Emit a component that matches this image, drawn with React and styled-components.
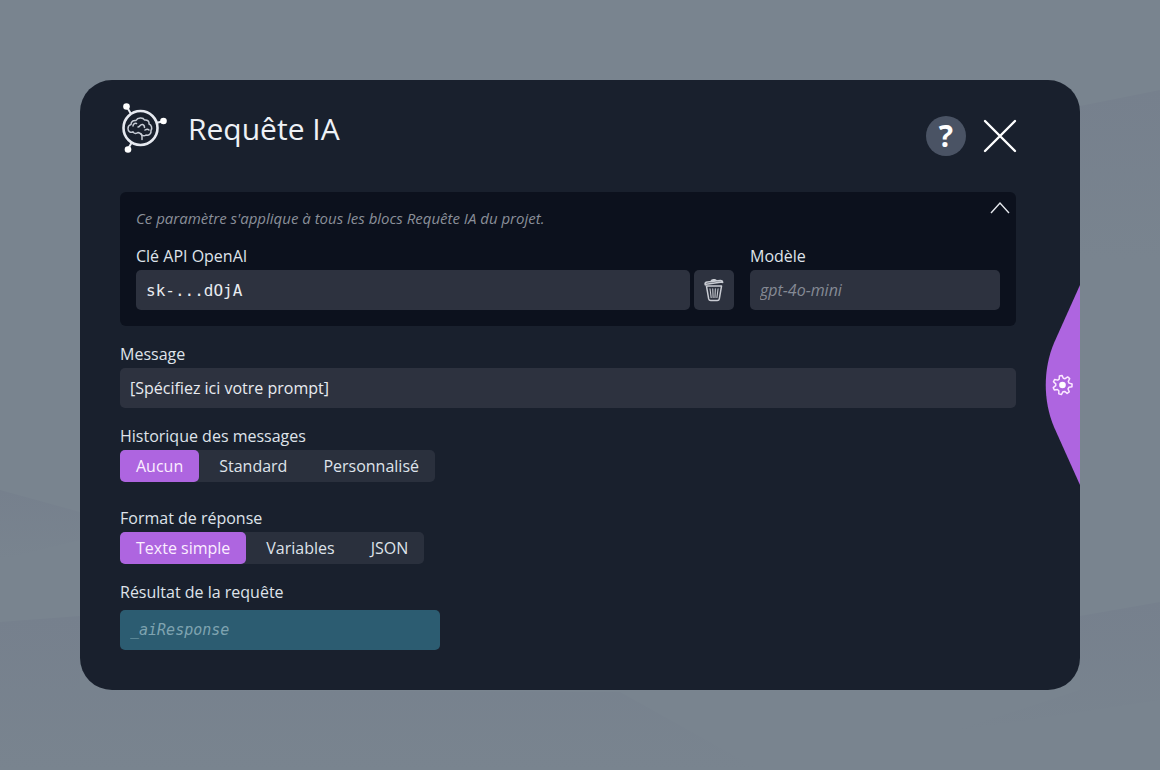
import React, { useState } from "react";
import styled, { createGlobalStyle } from "styled-components";

const GlobalStyle = createGlobalStyle`
  * {
    box-sizing: border-box;
  }
  body {
    margin: 0;
    background: #79848f;
    color: #dfe3ea;
    font-family: "Open Sans", "Noto Sans", sans-serif;
    font-size: 16px;
  }
`;

const Page = styled.div`
  position: relative;
  min-height: 100vh;
  padding: 80px;
`;

const Backdrop = styled.svg`
  position: absolute;
  inset: 0;
  width: 100%;
  height: 100%;
`;

const Modal = styled.main`
  position: relative;
  padding: 24px 64px 40px 40px;
  border-radius: 32px;
  background: #19202d;
  overflow: hidden;
`;

const Header = styled.header`
  display: flex;
  align-items: flex-start;
  margin-bottom: 36px;
`;

const Logo = styled.svg`
  width: 48px;
  height: 50px;
  overflow: visible;
`;

const Title = styled.h1`
  flex: 1;
  margin: 0 0 0 20px;
  color: #eef1f6;
  font-size: 30px;
  font-weight: 400;
  line-height: 50px;
`;

const Actions = styled.div`
  display: flex;
  gap: 18px;
  padding-top: 12px;
`;

const HelpButton = styled.button`
  width: 40px;
  height: 40px;
  padding: 0;
  border: none;
  border-radius: 50%;
  background: #4a5364;
  color: white;
  font-family: inherit;
  font-size: 30px;
  font-weight: 700;
  line-height: 40px;
  cursor: pointer;
`;

const CloseButton = styled.button`
  display: flex;
  align-items: center;
  justify-content: center;
  width: 32px;
  height: 40px;
  padding: 0;
  border: none;
  background: none;
  cursor: pointer;
  svg {
    flex: none;
    overflow: visible;
  }
`;

const Panel = styled.section`
  position: relative;
  padding: 16px;
  border-radius: 6px;
  background: #0c111d;
`;

const Hint = styled.p`
  margin: 0 0 14px;
  color: #8a8f99;
  font-size: 15px;
  font-style: italic;
  line-height: 20px;
`;

const CollapseButton = styled.button`
  position: absolute;
  top: 8px;
  right: 6px;
  display: flex;
  padding: 0;
  border: none;
  background: none;
  cursor: pointer;
`;

const PanelFields = styled.div`
  display: flex;
  align-items: flex-end;
  gap: 16px;
`;

const KeyGroup = styled.div`
  display: flex;
  flex: 1;
  align-items: flex-end;
  gap: 4px;
`;

const Field = styled.div`
  flex: ${(props) => (props.$width ? `0 0 ${props.$width}` : 1)};
  min-width: 0;
`;

const Form = styled.form`
  display: flex;
  flex-direction: column;
  gap: 14px;
`;

const Label = styled.label`
  display: block;
  line-height: 28px;
`;

const Input = styled.input`
  display: block;
  width: 100%;
  height: 40px;
  padding: 0 10px;
  border: none;
  border-radius: 5px;
  outline: none;
  background: #2d323f;
  color: #e8ebf0;
  font-family: ${(props) =>
    props.$mono ? `"DejaVu Sans Mono", monospace` : "inherit"};
  font-size: 16px;
  &::placeholder {
    color: #858a95;
    font-style: italic;
    opacity: 1;
  }
`;

const ResultInput = styled(Input)`
  width: 320px;
  max-width: 100%;
  margin-top: 4px;
  background: #2c5c71;
  font-size: 15px;
  &::placeholder {
    color: #7fa3b0;
  }
`;

const TrashButton = styled.button`
  display: flex;
  align-items: center;
  justify-content: center;
  width: 40px;
  height: 40px;
  padding: 0;
  border: none;
  border-radius: 5px;
  background: #2d323f;
  cursor: pointer;
`;

const Choice = styled.fieldset`
  min-width: 0;
  margin: 0;
  padding: 0;
  border: none;
  & + & {
    margin-top: 8px;
  }
`;

const Legend = styled.legend`
  padding: 0;
  line-height: 28px;
`;

const Segments = styled.div`
  display: inline-flex;
  gap: 4px;
  border-radius: 5px;
  background: #2a303d;
  vertical-align: top;
`;

const Segment = styled.label`
  position: relative;
  padding: 0 16px;
  border-radius: 5px;
  line-height: 32px;
  cursor: pointer;
  &:has(input:checked) {
    background: #ae65e0;
    color: #fbeeff;
  }
`;

const Radio = styled.input`
  position: absolute;
  inset: 0;
  width: 100%;
  height: 100%;
  margin: 0;
  opacity: 0;
  cursor: pointer;
`;

const SideTab = styled.button`
  position: absolute;
  top: 50%;
  right: 0;
  display: flex;
  padding: 0;
  border: none;
  background: none;
  transform: translateY(-50%);
  cursor: pointer;
`;

const BrainIcon = () => (
  <Logo viewBox="0 0 48 50" fill="none" stroke="#e6e9f0">
    <circle cx="20.500" cy="24" r="17" strokeWidth="2.600" />
    <path d="M7 3 11 10M36 19l8-2M8 45l4-7" strokeWidth="2" />
    <g fill="#fff" stroke="none">
      <circle cx="6.500" cy="2.500" r="3.300" />
      <circle cx="43.500" cy="17" r="3.300" />
      <circle cx="8" cy="45.500" r="3.300" />
    </g>
    <g stroke="#c6cbd5" strokeWidth="1.500" strokeLinecap="round" strokeLinejoin="round">
      <path d="M13 28c-3 1-5-1-5-3.500 0-2 1-3.500 3-4 0-3 2.500-4.500 5-4 1.500-3 7-3.500 8.500-.5 3-.5 5 1.500 4.500 4 2.500 1 3.500 4 2 6.500.5 3-2 5.500-5 4.500-2 1.500-4.500.5-5-1" />
      <path d="M13 28c1 2 4 1.500 5 .500 2 1 4 .5 4 4v3" />
      <path d="M13 22c0-2 1.500-3 3.500-2.500M18 23c2 0 2-3 4.500-2.500 1.500.3 2 1.500 2 3M25 26c1.500-1 3-1 4 0" />
    </g>
  </Logo>
);

const TrashIcon = () => (
  <svg width="20" height="23" viewBox="0 0 22 26" fill="none" stroke="#c9ccd3" strokeWidth="1.700" strokeLinecap="round" strokeLinejoin="round">
    <path d="M2.500 8h17l-2.500 14.500c-.2 1.300-1 1.800-2.300 1.800H7.300C6 24.300 5.300 23.800 5 22.500L2.500 8Z" />
    <path d="M1.200 6.800C.3 4.600 1.600 3.600 3.500 3.400L18 1.600c1.800-.2 2.700.8 2.800 2.300M2 5.800l18-2.300M7.500 2.700C8 1.200 9 .9 10.500.8c1.600-.1 2.500.1 3 1" />
    <path d="m6.500 11 1.300 10M9.600 11l.4 10M12.500 11l-.4 10M15.600 11l-1.300 10" strokeWidth="1.200" />
  </svg>
);

// seven teeth, each a short outer edge between two inner corners
const gearPoints = Array.from({ length: 7 }, (_, i) => {
  const center = -101 + (i * 360) / 7;
  return [
    [-18, 6.8],
    [-8, 9.6],
    [8, 9.6],
    [18, 6.8],
  ]
    .map(([offset, radius]) => {
      const angle = ((center + offset) * Math.PI) / 180;
      return `${radius * Math.cos(angle)},${radius * Math.sin(angle)}`;
    })
    .join(" ");
}).join(" ");

const SideShape = () => (
  <svg width="35" height="200" viewBox="0 0 35 200">
    <path d="M35 0 9 58C-2 84-2 116 9 142l26 58Z" fill="#ae65e0" />
    <g transform="translate(17.500 100)" stroke="#fbe9ff" fill="none">
      <polygon points={gearPoints} strokeWidth="1.500" strokeLinejoin="round" />
      <circle r="3.300" fill="#fff" stroke="none" />
    </g>
  </svg>
);

const SegmentedChoice = ({ legend, name, options }) => {
  const [selected, setSelected] = useState(options[0]);

  return (
    <Choice>
      <Legend>{legend}</Legend>
      <Segments>
        {options.map((option) => (
          <Segment key={option}>
            <Radio
              type="radio"
              name={name}
              value={option}
              checked={selected === option}
              onChange={() => setSelected(option)}
            />
            {option}
          </Segment>
        ))}
      </Segments>
    </Choice>
  );
};

const App = () => {
  const [apiKey, setApiKey] = useState("sk-...dOjA");
  const [message, setMessage] = useState("[Spécifiez ici votre prompt]");

  return (
    <>
      <GlobalStyle />
      <Page>
        <Backdrop viewBox="0 0 1160 770" preserveAspectRatio="none" aria-hidden="true">
          <defs>
            <linearGradient id="wave" x1="0" y1="0" x2="0" y2="1">
              <stop offset="0" stopColor="#76808d" />
              <stop offset="1" stopColor="#76808d" stopOpacity="0" />
            </linearGradient>
          </defs>
          <path d="M0 490 80 512V540L0 560Z" fill="url(#wave)" />
          <path d="M0 622 80 616V690L620 692 760 770H0Z" fill="url(#wave)" />
          <path d="M1160 90 1080 106V260H1160Z" fill="url(#wave)" />
          <path d="M1160 602 1080 616V690L950 732 1160 700Z" fill="url(#wave)" />
        </Backdrop>
        <Modal>
          <Header>
            <BrainIcon />
            <Title>Requête IA</Title>
            <Actions>
              <HelpButton type="button" aria-label="Aide">?</HelpButton>
              <CloseButton type="button" aria-label="Fermer">
                <svg width="34" height="34" viewBox="0 0 34 34" stroke="#fff" strokeWidth="2.400" strokeLinecap="round">
                  <path d="m2 2 30 30M32 2 2 32" />
                </svg>
              </CloseButton>
            </Actions>
          </Header>
          <Form onSubmit={(e) => e.preventDefault()}>
            <Panel>
              <Hint>Ce paramètre s'applique à tous les blocs Requête IA du projet.</Hint>
              <CollapseButton type="button" aria-label="Replier">
                <svg width="20" height="16" viewBox="0 0 20 16" fill="none" stroke="#e4e7ec" strokeWidth="1.400">
                  <path d="m1 13 9-10 9 10" />
                </svg>
              </CollapseButton>
              <PanelFields>
                <KeyGroup>
                  <Field>
                    <Label htmlFor="api-key">Clé API OpenAI</Label>
                    <Input
                      id="api-key"
                      $mono
                      value={apiKey}
                      onChange={(e) => setApiKey(e.target.value)}
                    />
                  </Field>
                  <TrashButton type="button" aria-label="Supprimer" onClick={() => setApiKey("")}>
                    <TrashIcon />
                  </TrashButton>
                </KeyGroup>
                <Field $width="250px">
                  <Label htmlFor="model">Modèle</Label>
                  <Input id="model" placeholder="gpt-4o-mini" />
                </Field>
              </PanelFields>
            </Panel>
            <div>
              <Label htmlFor="message">Message</Label>
              <Input
                id="message"
                value={message}
                onChange={(e) => setMessage(e.target.value)}
              />
            </div>
            <SegmentedChoice
              legend="Historique des messages"
              name="history"
              options={["Aucun", "Standard", "Personnalisé"]}
            />
            <SegmentedChoice
              legend="Format de réponse"
              name="format"
              options={["Texte simple", "Variables", "JSON"]}
            />
            <div>
              <Label htmlFor="result">Résultat de la requête</Label>
              <ResultInput id="result" $mono placeholder="_aiResponse" />
            </div>
          </Form>
          <SideTab type="button" aria-label="Réglages">
            <SideShape />
          </SideTab>
        </Modal>
      </Page>
    </>
  );
};

export default App;
